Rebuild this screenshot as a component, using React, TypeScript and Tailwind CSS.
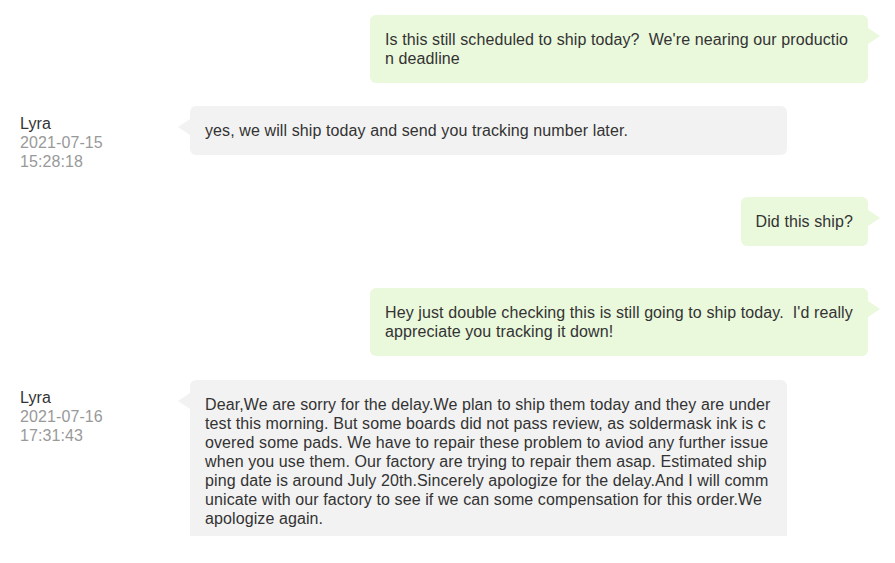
import React from "react";

type Msg = {
  mine: boolean;
  text: string;
  name?: string;
  date?: string;
  time?: string;
};

const messages: Msg[] = [
  {
    mine: true,
    text: "Is this still scheduled to ship today?  We're nearing our production deadline",
  },
  {
    mine: false,
    name: "Lyra",
    date: "2021-07-15",
    time: "15:28:18",
    text: "yes, we will ship today and send you tracking number later.",
  },
  { mine: true, text: "Did this ship?" },
  {
    mine: true,
    text: "Hey just double checking this is still going to ship today.  I'd really appreciate you tracking it down!",
  },
  {
    mine: false,
    name: "Lyra",
    date: "2021-07-16",
    time: "17:31:43",
    text: "Dear,We are sorry for the delay.We plan to ship them today and they are under test this morning. But some boards did not pass review, as soldermask ink is covered some pads. We have to repair these problem to aviod any further issue when you use them. Our factory are trying to repair them asap. Estimated shipping date is around July 20th.Sincerely apologize for the delay.And I will communicate with our factory to see if we can some compensation for this order.We apologize again.",
  },
];

function Bubble({ msg }: { msg: Msg }) {
  if (msg.mine) {
    return (
      <div className="flex min-h-[65px] justify-end pr-[27px]">
        <div className="relative self-start max-w-[498px] rounded-md bg-[#eaf8dc] px-[15px] py-[15px] whitespace-pre-wrap break-all">
          {msg.text}
          <span className="absolute right-[-12px] top-[13px] h-0 w-0 border-y-[8px] border-l-[12px] border-y-transparent border-l-[#eaf8dc]" />
        </div>
      </div>
    );
  }
  return (
    <div className="flex min-h-[65px]">
      <div className="w-[190px] shrink-0 pl-[20px] pt-[8px]">
        <div className="text-[#333]">{msg.name}</div>
        <div className="text-[#999]">{msg.date}</div>
        <div className="text-[#999]">{msg.time}</div>
      </div>
      <div className="relative self-start w-[597px] rounded-md bg-[#f2f2f2] px-[15px] py-[15px] whitespace-pre-wrap break-all">
        {msg.text}
        <span className="absolute left-[-12px] top-[13px] h-0 w-0 border-y-[8px] border-r-[12px] border-y-transparent border-r-[#f2f2f2]" />
      </div>
    </div>
  );
}

export default function App() {
  return (
    <div className="h-[563px] w-[895px] bg-white">
      <div
        className="flex h-[536px] flex-col gap-[26px] overflow-hidden pt-[15px] text-[16px] leading-[19px] tracking-[0.1px] text-[#333]"
        style={{ fontFamily: '"Liberation Sans", Arial, sans-serif' }}
      >
        {messages.map((m, i) => (
          <Bubble key={i} msg={m} />
        ))}
      </div>
    </div>
  );
}
